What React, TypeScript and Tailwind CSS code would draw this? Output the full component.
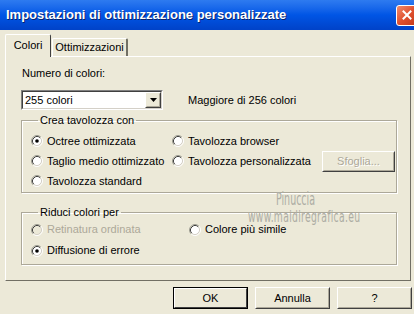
import React from 'react';

const ui = "font-['Liberation_Sans',Arial,sans-serif] text-[11px] text-black";

function Radio({ checked = false, disabled = false }: { checked?: boolean; disabled?: boolean }) {
  return (
    <svg width="12" height="12" viewBox="0 0 12 12" className="shrink-0">
      <circle cx="6" cy="6" r="4.5" fill={disabled ? '#ECE9D8' : '#ffffff'} />
      <path d="M2.11 9.89 A5.5 5.5 0 0 1 9.89 2.11" fill="none" stroke="#9D9D92" strokeWidth="1" />
      <path d="M9.89 2.11 A5.5 5.5 0 0 1 2.11 9.89" fill="none" stroke="#ffffff" strokeWidth="1" />
      <path d="M2.82 9.18 A4.5 4.5 0 0 1 9.18 2.82" fill="none" stroke="#404040" strokeWidth="1" />
      <path d="M9.18 2.82 A4.5 4.5 0 0 1 2.82 9.18" fill="none" stroke="#D4D0C8" strokeWidth="1" />
      {checked && <circle cx="6" cy="6" r="1.8" fill="#000000" />}
    </svg>
  );
}

function Option({ label, checked, disabled }: { label: string; checked?: boolean; disabled?: boolean }) {
  return (
    <div className="flex items-center gap-[3px]">
      <Radio checked={checked} disabled={disabled} />
      <span className={disabled ? 'text-[#ACA899] ml-[1px]' : 'ml-[1px]'}>{label}</span>
    </div>
  );
}

function Button({ children, primary, disabled, className = '' }: { children: React.ReactNode; primary?: boolean; disabled?: boolean; className?: string }) {
  return (
    <div
      className={`flex items-center justify-center bg-[#ECE9D8] border ${
        primary ? 'border-black' : 'border-t-white border-l-white border-r-[#404040] border-b-[#404040]'
      } ${className}`}
    >
      <div
        className={`w-full h-full flex items-center justify-center border ${
          primary
            ? 'border-t-white border-l-white border-r-[#404040] border-b-[#404040]'
            : 'border-t-[#ECE9D8] border-l-[#ECE9D8] border-r-[#ACA899] border-b-[#ACA899]'
        } ${disabled ? 'text-[#ACA899] [text-shadow:1px_1px_0_#ffffff]' : ''}`}
      >
        {children}
      </div>
    </div>
  );
}

export default function App() {
  return (
    <div className={`w-[414px] h-[314px] overflow-hidden bg-[#ECE9D8] relative ${ui}`}>
      {/* title bar */}
      <div className="h-[30px] flex items-center justify-between bg-gradient-to-b from-[#2E7BF0] via-[#0055E5] to-[#0042C8]">
        <span className="pl-[6px] text-white font-bold text-[13px] [text-shadow:1px_1px_0_#0A246A]">
          Impostazioni di ottimizzazione personalizzate
        </span>
        <div className="w-[22px] h-[21px] mr-[-4px] rounded-[3px] border border-white bg-gradient-to-br from-[#F08A6B] via-[#E0502E] to-[#C0381A] flex items-center justify-center">
          <svg width="10" height="10" viewBox="0 0 10 10">
            <path d="M1.5 1.5 L8.5 8.5 M8.5 1.5 L1.5 8.5" stroke="#ffffff" strokeWidth="2" strokeLinecap="square" />
          </svg>
        </div>
      </div>

      {/* tabs */}
      <div className="flex items-end pl-[5px] h-[27px] -mb-px relative z-10">
        <div className="h-[23px] w-[46px] bg-[#ECE9D8] border-t border-l border-t-white border-l-white border-r border-r-[#404040] rounded-t-[2px] flex items-center justify-center pb-[2px]">
          Colori
        </div>
        <div className="h-[18px] w-[76px] ml-[1px] mb-px bg-[#ECE9D8] border-t border-l border-t-white border-l-white border-r-2 border-r-[#716F64] rounded-t-[2px] flex items-center justify-center">
          Ottimizzazioni
        </div>
      </div>

      {/* panel */}
      <div className="ml-[5px] w-[406px] h-[225px] border border-t-white border-l-white border-r-[#716F64] border-b-[#716F64] px-[15px]">
        <div className="pl-px pt-[9px] leading-[14px]">Numero di colori:</div>
        <div className="flex items-center mt-[10px]">
          <div className="w-[142px] h-[20px] border border-t-[#808080] border-l-[#808080] border-r-white border-b-white">
            <div className="h-full flex items-center justify-between bg-white border border-t-[#404040] border-l-[#404040] border-r-[#D4D0C8] border-b-[#D4D0C8]">
              <span className="pl-[2px]">255 colori</span>
              <Button className="w-[16px] h-[16px]">
                <svg width="7" height="4" viewBox="0 0 7 4">
                  <path d="M0 0 H7 L3.5 4 Z" fill="#000000" />
                </svg>
              </Button>
            </div>
          </div>
          <span className="ml-[25px]">Maggiore di 256 colori</span>
        </div>

        <fieldset className="mt-[3px] w-[376px] border border-[#ACA899] shadow-[inset_1px_1px_0_#ffffff,1px_1px_0_#ffffff] pl-[9px] pb-px">
          <legend className="ml-[7px] px-[2px] leading-[14px]">Crea tavolozza con</legend>
          <div className="grid grid-cols-[141px_150px_auto] auto-rows-[20px] items-center mt-[4px]">
            <Option label="Octree ottimizzata" checked />
            <Option label="Tavolozza browser" />
            <div />
            <Option label="Taglio medio ottimizzato" />
            <Option label="Tavolozza personalizzata" />
            <Button disabled className="w-[73px] h-[21px]">Sfoglia...</Button>
            <Option label="Tavolozza standard" />
          </div>
        </fieldset>

        <fieldset className="mt-[12px] w-[376px] border border-[#ACA899] shadow-[inset_1px_1px_0_#ffffff,1px_1px_0_#ffffff] pl-[9px] pb-[3px]">
          <legend className="ml-[7px] px-[2px] leading-[14px]">Riduci colori per</legend>
          <div className="grid grid-cols-[158px_auto] auto-rows-[21px] items-center">
            <Option label="Retinatura ordinata" disabled />
            <Option label="Colore più simile" />
            <Option label="Diffusione di errore" checked />
          </div>
        </fieldset>
      </div>

      {/* buttons */}
      <div className="flex justify-end gap-[7px] pr-[2px] mt-[6px]">
        <Button primary className="w-[75px] h-[22px]">OK</Button>
        <Button className="w-[75px] h-[22px]">Annulla</Button>
        <Button className="w-[75px] h-[22px]">?</Button>
      </div>

      {/* watermark */}
      <div className="absolute left-[248px] top-[191px] flex flex-col items-start text-[#ADADA4] font-['DejaVu_Sans_Condensed','DejaVu_Sans',sans-serif] pointer-events-none leading-none">
        <span className="text-[17px] ml-[28px] origin-left scale-x-[0.62]">Pinuccia</span>
        <span className="text-[16px] mt-[1px] origin-left scale-x-[0.64] tracking-[0.5px]">www.maidiregrafica.eu</span>
      </div>
    </div>
  );
}
